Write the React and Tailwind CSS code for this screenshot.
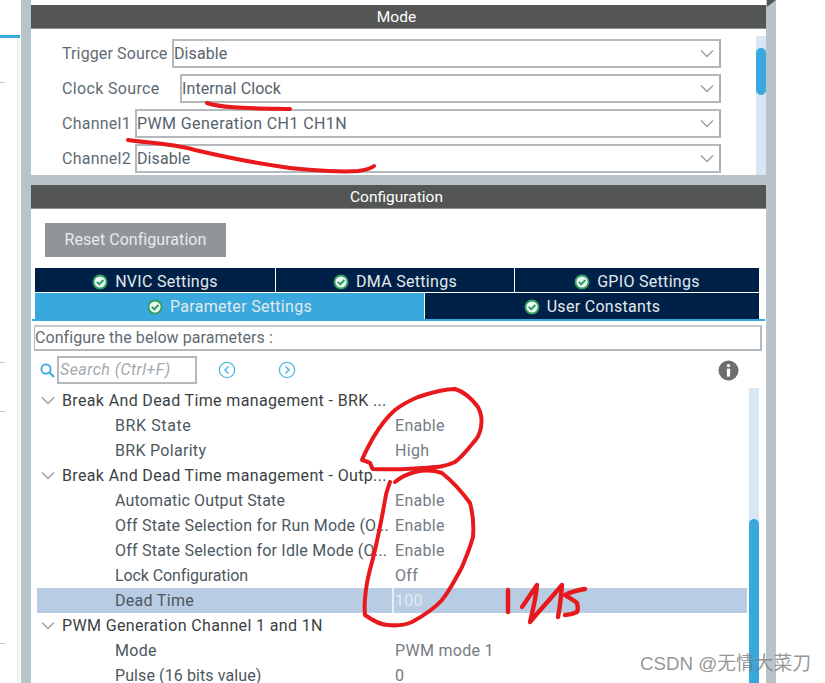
import React from "react";

function Chevron({ className }) {
  return (
    <svg className={className} width="14" height="9" viewBox="0 0 14 9" fill="none">
      <path d="M1 1.5 L7 7.5 L13 1.5" stroke="#9a9fa4" strokeWidth="1.4" />
    </svg>
  );
}

function Check() {
  return (
    <svg width="16" height="16" viewBox="0 0 16 16" className="shrink-0">
      <circle cx="8" cy="8" r="7.5" fill="#2f9f63" />
      <circle cx="8" cy="8" r="5.6" fill="#eef8f2" />
      <path d="M4.8 7.9 L7.2 10.3 L11.4 6" stroke="#2f9f63" strokeWidth="2" fill="none" />
    </svg>
  );
}

function Header({ children }) {
  return (
    <div className="h-[24px] bg-[#545655] border-b border-b-[#8b8f90] flex items-center justify-center pt-[2px] pr-[4px] text-white text-[15.5px]">
      {children}
    </div>
  );
}

function SelectRow({ label, labelW, labelTrack, value, valueTrack }) {
  return (
    <div className="flex h-[29px] items-center">
      <div className={`${labelW} ${labelTrack} shrink-0 text-[#5f6b74] text-[16px]`}>{label}</div>
      <div className="flex-1 h-[29px] border-2 border-[#b3b9bd] border-r-[#a9afb3] bg-white flex items-center justify-between pr-[5px]">
        <span className={`${valueTrack} text-[#56626c] text-[16px]`}>{value}</span>
        <Chevron />
      </div>
    </div>
  );
}

function Tab({ width, children, active, pad }) {
  return (
    <div
      className={`${width} ${pad} ${active ? "bg-[#38a8dd]" : "bg-[#002147]"} h-full flex items-center justify-center gap-[7px] text-[#e4e9ee] text-[16px] tracking-[0.3px]`}
    >
      <Check />
      <span>{children}</span>
    </div>
  );
}

function Section({ children }) {
  return (
    <div className="h-[25px] shrink-0 flex items-center pl-[4px] text-[#3a3f44] text-[16px] tracking-[0.36px] whitespace-nowrap">
      <Chevron className="mr-[7px]" />
      <span>{children}</span>
    </div>
  );
}

function Param({ label, value, active, track = "tracking-[0.15px]" }) {
  return (
    <div className={`h-[25px] shrink-0 flex items-center text-[16px] whitespace-nowrap ${active ? "bg-[#b8cde3]" : ""}`}>
      <div className={`w-[355px] shrink-0 pl-[78px] overflow-hidden text-[#4d5760] ${track}`}>{label}</div>
      <div className={`h-full flex items-center pl-[1px] tracking-[0.3px] ${active ? "border-l-2 border-l-[#e6eef6] text-[#e3ebf3]" : "border-l-2 border-l-transparent text-[#737c84]"}`}>
        {value}
      </div>
    </div>
  );
}

export default function App() {
  return (
    <div className="relative w-[825px] h-[683px] overflow-hidden bg-white flex font-['Roboto','Liberation_Sans',sans-serif]">
      {/* left edge of the neighbouring pane */}
      <div className="w-[21px] shrink-0 flex flex-col">
        <div className="mt-[35px] h-[3px] w-[20px] bg-[#38a8dd]" />
        <div className="w-[20px] flex-1 border-r-[3px] border-r-[#f0f2f3] flex flex-col">
          <div className="mt-[44px] h-px w-[5px] bg-[#c4c8cc]" />
          <div className="mt-[279px] h-px w-[5px] bg-[#c4c8cc]" />
          <div className="mt-[48px] h-px w-[5px] bg-[#c4c8cc]" />
          <div className="mt-[231px] h-px w-[5px] bg-[#c4c8cc]" />
        </div>
      </div>

      <div className="w-[10px] shrink-0 bg-[#b9c4ca]" />

      {/* main panel */}
      <div className="w-[735px] shrink-0 flex flex-col bg-white">
        <div className="h-[5px]" />
        <Header>Mode</Header>

        <div className="h-[146px] flex">
          <div className="w-[659px] ml-[31px] pt-[10px] flex flex-col gap-[6px] shrink-0">
            <SelectRow label="Trigger Source" labelW="w-[110px]" labelTrack="tracking-[0.12px]" valueTrack="tracking-[0.1px]" value="Disable" />
            <SelectRow label="Clock Source" labelW="w-[118px]" labelTrack="tracking-[0.35px]" valueTrack="tracking-[0.1px]" value="Internal Clock" />
            <SelectRow label="Channel1" labelW="w-[73px]" labelTrack="tracking-[0.25px]" valueTrack="tracking-[0.4px]" value="PWM Generation CH1 CH1N" />
            <SelectRow label="Channel2" labelW="w-[73px]" labelTrack="tracking-[0.25px]" valueTrack="tracking-[0.1px]" value="Disable" />
          </div>
          <div className="ml-[35px] mt-[7px] w-[10px] bg-[#d9e7f5]">
            <div className="mt-[12px] h-[47px] rounded-[5px] bg-[#38a8dd]" />
          </div>
        </div>

        <div className="h-[10px] bg-[#b9c4ca]" />
        <Header>Configuration</Header>

        <div className="flex-1 min-h-0 flex flex-col overflow-hidden">
          <div className="mt-[14px] ml-[14px] w-[181px] h-[34px] shrink-0 bg-[#8f9599] flex items-center justify-center text-[#e8eaeb] text-[16px] tracking-[0.05px]">
            Reset Configuration
          </div>

          <div className="mt-[11px] ml-[4px] w-[724px] h-[24px] shrink-0 flex gap-px">
            <Tab width="w-[240px]" pad="pt-[3px]">NVIC Settings</Tab>
            <Tab width="w-[238px]" pad="pt-[3px]">DMA Settings</Tab>
            <Tab width="w-[244px]" pad="pt-[3px]">GPIO Settings</Tab>
          </div>
          <div className="mt-px ml-[4px] w-[724px] h-[26px] shrink-0 flex gap-px">
            <Tab width="w-[389px]" pad="pt-[2px]" active>Parameter Settings</Tab>
            <Tab width="w-[334px]" pad="pt-[2px]">User Constants</Tab>
          </div>
          <div className="ml-px w-[733px] h-[2px] shrink-0 bg-[#38a8dd]" />

          <div className="mt-[4px] ml-[3px] w-[728px] h-[26px] shrink-0 border-2 border-l border-[#b3b9bd] border-t-[#c4c9cc] flex items-center text-[#5f6b74] text-[16px] tracking-[0.07px]">
            Configure the below parameters :
          </div>

          <div className="mt-[5px] h-[28px] shrink-0 flex items-center">
            <svg className="ml-[9px] shrink-0" width="15" height="15" viewBox="0 0 15 15" fill="none">
              <circle cx="6" cy="6" r="4.6" stroke="#38a8dd" strokeWidth="1.8" />
              <path d="M9.5 9.5 L14 14" stroke="#38a8dd" strokeWidth="2" />
            </svg>
            <div className="ml-[2px] w-[140px] h-[28px] border-2 border-[#b3b9bd] flex items-center pl-[1px] text-[#a3a9ae] italic text-[16px] tracking-[0.45px] whitespace-nowrap">
              Search (Ctrl+F)
            </div>
            <svg className="ml-[21px] shrink-0" width="18" height="18" viewBox="0 0 18 18" fill="none">
              <circle cx="9" cy="9" r="7.6" stroke="#5bb8e6" strokeWidth="1.4" />
              <path d="M10.5 5.5 L7 9 L10.5 12.5" stroke="#5bb8e6" strokeWidth="1.6" />
            </svg>
            <svg className="ml-[42px] shrink-0" width="18" height="18" viewBox="0 0 18 18" fill="none">
              <circle cx="9" cy="9" r="7.6" stroke="#5bb8e6" strokeWidth="1.4" />
              <path d="M7.5 5.5 L11 9 L7.5 12.5" stroke="#5bb8e6" strokeWidth="1.6" />
            </svg>
            <svg className="ml-[422px] shrink-0" width="21" height="21" viewBox="0 0 21 21">
              <circle cx="10.5" cy="10.5" r="10" fill="#6b6d6e" />
              <circle cx="10.5" cy="5.6" r="1.7" fill="#fff" />
              <rect x="8.9" y="8.6" width="3.2" height="8" fill="#fff" />
            </svg>
          </div>

          <div className="mt-[4px] flex flex-1 min-h-0">
            <div className="ml-[6px] w-[710px] shrink-0 flex flex-col">
              <Section>Break And Dead Time management - BRK ...</Section>
              <Param label="BRK State" value="Enable" track="tracking-[0.6px]" />
              <Param label="BRK Polarity" value="High" track="tracking-[0.3px]" />
              <Section>Break And Dead Time management - Outp...</Section>
              <Param label="Automatic Output State" value="Enable" />
              <Param label="Off State Selection for Run Mode (O..." value="Enable" track="tracking-[0.22px]" />
              <Param label="Off State Selection for Idle Mode (O..." value="Enable" track="tracking-[0.22px]" />
              <Param label="Lock Configuration" value="Off" track="tracking-[-0.1px]" />
              <Param label="Dead Time" value="100" active track="tracking-[0.3px]" />
              <Section>PWM Generation Channel 1 and 1N</Section>
              <Param label="Mode" value="PWM mode 1" track="tracking-[0.3px]" />
              <Param label="Pulse (16 bits value)" value="0" track="tracking-[0.1px]" />
            </div>
            <div className="ml-[2px] w-[10px] bg-[#d9e7f5] flex flex-col">
              <div className="mt-[131px] flex-1 rounded-t-[5px] bg-[#38a8dd]" />
            </div>
          </div>
        </div>
      </div>

      <div className="w-[10px] shrink-0 bg-[#b9c4ca]" />

      {/* red pen annotations */}
      <svg className="absolute left-0 top-0 pointer-events-none" width="825" height="683" viewBox="0 0 825 683" fill="none">
        <path d="M767 7 L767 0 L776 0 Z" fill="#555756" />
        <g stroke="#e8191c" strokeWidth="4" strokeLinecap="round" strokeLinejoin="round">
          <path d="M207 103 C222 108 245 108 290 109" />
          <path d="M128 140 C145 143 167 142 195 150 C225 157 253 163 290 168 C315 171 345 172 358 171 C365 170 370 169 374 166" />
          <path d="M362 460 C365 452 368 447 373 438 C380 426 387 417 395 410 C404 403 411 400 418 397 C430 393 443 389 455 389 C465 392 472 399 478 407 C482 415 482 420 481 427 C480 434 477 439 473 443 C467 450 462 457 455 462 C445 467 435 467 422 468 C405 469 390 470 373 469 C371 467 371 464 370 463 C367 461 365 461 362 460 Z" />
          <path d="M390 482 C388 488 386 492 385 500 C382 518 379 532 375 550 C372 563 369 572 367 583 C365 595 364 606 365 615 C372 620 380 625 388 625 C397 626 405 625 412 622 C423 616 434 609 442 600 C450 590 456 578 462 567 C467 555 470 548 473 537 C474 525 473 514 470 503 C462 492 452 481 442 473 C433 470 424 470 415 472 C407 474 401 477 395 482" />
          <path d="M508 590 L508 612" strokeWidth="4.4" />
          <path d="M522 607 C527 600 532 592 537 585 C536 597 533 610 530 622 C540 610 552 597 562 585 C561 597 560 607 558 617" strokeWidth="4.4" />
          <path d="M585 589 C578 590 571 592 565 595 C569 598 574 600 577 603 C578 607 578 610 577 612 C573 614 569 615 565 615" strokeWidth="4.4" />
        </g>
      </svg>

      {/* watermark */}
      <div className="absolute left-[640px] top-[653px] text-[18.75px] leading-[22px] text-[#7a7a7a]/80 whitespace-nowrap font-['Liberation_Sans','Noto_Sans_CJK_SC',sans-serif]">
        CSDN @无情大菜刀
      </div>
    </div>
  );
}
